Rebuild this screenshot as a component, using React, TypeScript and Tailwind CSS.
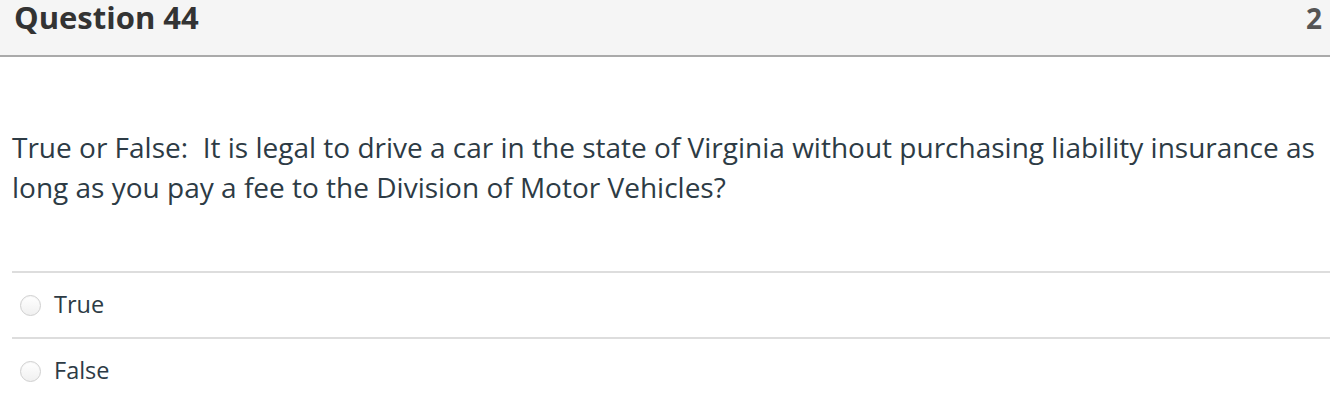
const answers = ["True", "False"];

function Radio() {
  return (
    <span className="inline-block w-[21px] h-[21px] rounded-full border border-[#cfcfcf] bg-gradient-to-b from-[#ffffff] to-[#f0f0f0] shadow-[inset_0_1px_1px_rgba(0,0,0,0.04)] shrink-0" />
  );
}

export default function App() {
  return (
    <div className="w-[1330px] h-[406px] bg-white text-[#2d3b45] font-['Open_Sans',sans-serif] overflow-hidden">
      {/* Header */}
      <div className="h-[57px] bg-[#f5f5f5] border-b-2 border-[#aaaaaa] flex items-baseline justify-between pl-[14px] pr-[8px]">
        <h2 className="text-[31px] font-bold text-[#333333] leading-[34px]">Question 44</h2>
        <span className="text-[28px] font-bold text-[#555555] leading-[34px]">2</span>
      </div>

      {/* Question text */}
      <div className="pl-[12px] pr-[12px] pt-[70px] pb-[64px] text-[28px] leading-[40px] text-[#2d3b45]">
        True or False:&nbsp; It is legal to drive a car in the state of Virginia without purchasing liability insurance as long as you pay a fee to the Division of Motor Vehicles?
      </div>

      {/* Answers */}
      <div className="ml-[12px]">
        {answers.map((a) => (
          <label key={a} className="flex items-center gap-[13px] h-[66px] border-t-2 border-[#dddddd] pl-[8px]">
            <Radio />
            <span className="text-[23.5px] text-[#2d3b45]">{a}</span>
          </label>
        ))}
      </div>
    </div>
  );
}
